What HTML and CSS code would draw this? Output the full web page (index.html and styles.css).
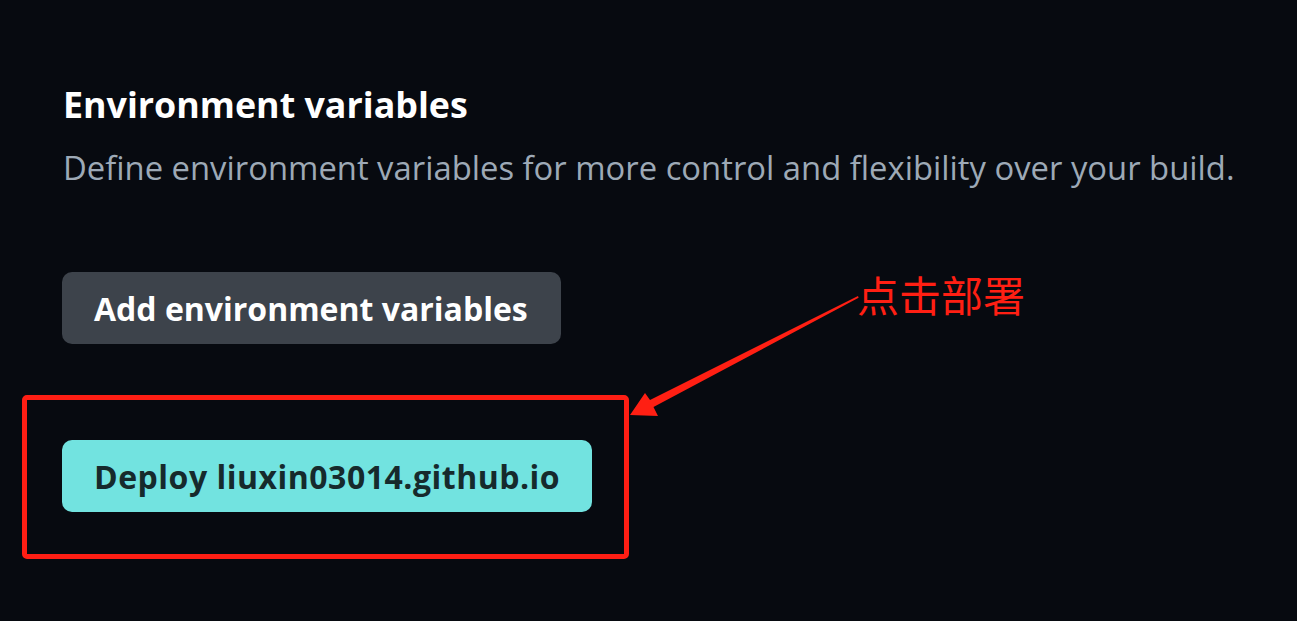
FILE: index.html
```html
<!DOCTYPE html>
<html lang="en">
<head>
<meta charset="utf-8">
<link rel="stylesheet" href="styles.css">
</head>
<body>
<main class="page">
  <section class="section">
    <h2 class="title">Environment variables</h2>
    <p class="desc">Define environment variables for more control and flexibility over your build.</p>
    <button class="btn btn-secondary">Add environment variables</button>
    <button class="btn btn-deploy">Deploy liuxin03014.github.io</button>
  </section>
</main>
<div class="annot-box"></div>
<svg class="annot-arrow" width="1297" height="621" viewBox="0 0 1297 621">
  <polygon points="858,296 650,400 645,393 630,415 658,416 653.5,407 858.6,297.8" fill="#ff1f13"/>
</svg>
<div class="annot-label">点击部署</div>
</body>
</html>
```

FILE: styles.css
```css
html, body {
  margin: 0;
  padding: 0;
  background: #070a10;
  height: 100%;
  overflow: hidden;
}
body {
  font-family: "Open Sans", "Noto Sans", "Liberation Sans", sans-serif;
  position: relative;
}
.page {
  padding: 78px 0 0 63px;
}
.section {
  display: flex;
  flex-direction: column;
  align-items: flex-start;
}
.title {
  margin: 0;
  color: #ffffff;
  font-size: 35.8px;
  font-weight: 700;
  line-height: 52px;
}
.desc {
  margin: 16px 0 0 0;
  color: #9da9b6;
  font-size: 32.8px;
  font-weight: 400;
  line-height: 44px;
}
.btn {
  border: none;
  font-family: inherit;
  font-weight: 700;
  font-size: 32px;
  height: 72px;
  border-radius: 10px;
  padding: 0 32px;
  cursor: pointer;
}
.btn-secondary {
  margin: 82px 0 0 -1px;
  background: #3d434b;
  color: #ffffff;
  padding: 0 33px 0 32px;
}
.btn-deploy {
  margin: 96px 0 0 -1px;
  background: #72e3e0;
  color: #162a2c;
  letter-spacing: 0.5px;
}
.annot-box {
  position: absolute;
  left: 22px;
  top: 395px;
  width: 597px;
  height: 154px;
  border: 5px solid #ff1e14;
  border-radius: 5px;
}
.annot-arrow {
  position: absolute;
  left: 0;
  top: 0;
}
.annot-label {
  position: absolute;
  left: 857px;
  top: 266px;
  color: #ff1f13;
  font-family: "Noto Sans CJK SC", sans-serif;
  font-size: 42px;
  line-height: 56px;
}
```
